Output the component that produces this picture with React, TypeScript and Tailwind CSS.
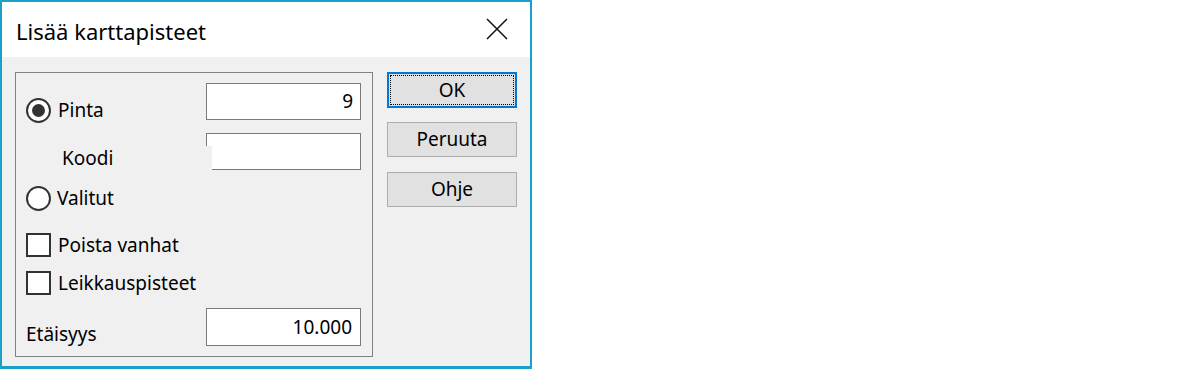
import React from "react";

const font = { fontFamily: '"Noto Sans", "Liberation Sans", sans-serif' };

function Radio({ checked }: { checked?: boolean }) {
  return (
    <div className="w-[25px] h-[25px] rounded-full border-2 border-[#333333] bg-white flex items-center justify-center shrink-0">
      {checked && <div className="w-[13px] h-[13px] rounded-full bg-[#333333]" />}
    </div>
  );
}

function Check() {
  return <div className="w-[25px] h-[24px] border-2 border-[#333333] bg-white shrink-0" />;
}

function Btn({ label, focused }: { label: string; focused?: boolean }) {
  if (focused) {
    return (
      <div className="w-[130px] h-[36px] border-2 border-[#0078d7] bg-[#e1e1e1] p-px">
        <div className="w-full h-full border border-dotted border-black flex items-center justify-center text-[19px] text-black leading-none">
          {label}
        </div>
      </div>
    );
  }
  return (
    <div className="w-[130px] h-[35px] border border-[#adadad] bg-[#e1e1e1] flex items-center justify-center text-[19px] text-black leading-none">
      {label}
    </div>
  );
}

export default function App() {
  return (
    <div className="w-[1200px] h-[369px] bg-white flex" style={font}>
      <div className="w-[532px] h-[369px] border-x-2 border-t-2 border-b-[3px] border-[#19a2c8] flex flex-col">
        <div className="h-[55px] bg-white flex items-center justify-between pl-[14px] pr-[22px] shrink-0">
          <span className="text-[22px] text-black leading-none mt-[3px]">Lisää karttapisteet</span>
          <svg width="22" height="22" viewBox="0 0 22 22" className="mt-[-1px]">
            <path d="M1 1 L21 21 M21 1 L1 21" stroke="#111" strokeWidth="1.5" fill="none" />
          </svg>
        </div>
        <div className="flex-1 bg-[#f0f0f0] flex pl-[13px] pt-[15px]">
          <div className="w-[358px] h-[285px] border border-[#828282] flex justify-between text-[19px] text-black leading-none">
            <div className="flex flex-col pl-[10px]">
              <div className="mt-[25px] h-[25px] flex items-center gap-[7px]">
                <Radio checked />
                <span>Pinta</span>
              </div>
              <div className="mt-[23px] h-[24px] flex items-center pl-[36px]">
                <span>Koodi</span>
              </div>
              <div className="mt-[16px] h-[25px] flex items-center gap-[6px]">
                <Radio />
                <span>Valitut</span>
              </div>
              <div className="mt-[22px] h-[24px] flex items-center gap-[7px]">
                <Check />
                <span>Poista vanhat</span>
              </div>
              <div className="mt-[14px] h-[24px] flex items-center gap-[7px]">
                <Check />
                <span>Leikkauspisteet</span>
              </div>
              <div className="mt-[27px] h-[24px] flex items-center">
                <span>Etäisyys</span>
              </div>
            </div>
            <div className="flex flex-col pr-[11px]">
              <div className="mt-[10px] w-[155px] h-[37px] border border-[#7a7a7a] bg-white flex items-center justify-end pr-[7px]">
                9
              </div>
              <div className="relative mt-[13px] w-[155px] h-[37px] border border-[#7a7a7a] bg-white">
                <div className="absolute left-[-1px] top-[12px] w-[6px] h-[25px] bg-[#f0f0f0]" />
              </div>
              <div className="mt-[138px] w-[155px] h-[38px] border border-[#7a7a7a] bg-white flex items-center justify-end pr-[8px]">
                10.000
              </div>
            </div>
          </div>
          <div className="flex flex-col ml-[14px] gap-[15px]">
            <Btn label="OK" focused />
            <div className="mt-[-1px]">
              <Btn label="Peruuta" />
            </div>
            <Btn label="Ohje" />
          </div>
        </div>
      </div>
    </div>
  );
}
